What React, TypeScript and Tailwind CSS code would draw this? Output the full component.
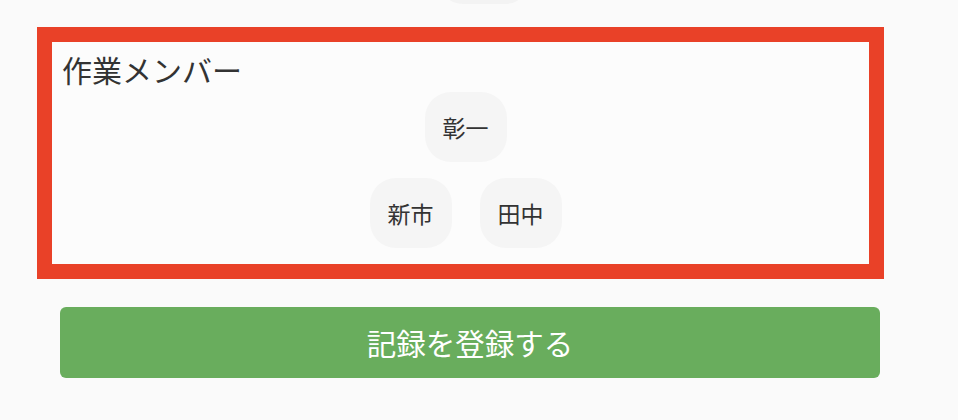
import React from "react";

function Chip({ name }: { name: string }) {
  return (
    <div className="flex h-[70px] w-[82px] items-center justify-center rounded-[26px] bg-[#f5f5f5] text-[23px] text-[#333333]">
      {name}
    </div>
  );
}

export default function App() {
  return (
    <div
      className="h-[420px] w-[958px] overflow-hidden bg-[#fafafa]"
      style={{ fontFamily: '"Noto Sans CJK JP", "Noto Sans", sans-serif' }}
    >
      <div className="flex h-[27px] justify-center pl-[9px]">
        <div className="-mt-[66px] h-[70px] w-[90px] rounded-[24px] bg-[#f3f3f3]" />
      </div>
      <section className="ml-[37px] h-[252px] w-[847px] border-[15px] border-[#e94128] bg-[#fcfcfc]">
        <div className="pl-[10px]">
          <h2 className="pt-[6px] text-[30px] leading-[42px] font-normal text-[#333333]">
            作業メンバー
          </h2>
          <div className="mt-[2px] flex flex-col items-center gap-[16px]">
            <div className="flex justify-center gap-[28px]">
              <Chip name="彰一" />
            </div>
            <div className="flex justify-center gap-[28px]">
              <Chip name="新市" />
              <Chip name="田中" />
            </div>
          </div>
        </div>
      </section>
      <button className="ml-[60px] mt-[28px] flex h-[71px] w-[820px] items-center justify-center rounded-[6px] bg-[#69ad5d] text-[29.5px] text-white">
        記録を登録する
      </button>
    </div>
  );
}
